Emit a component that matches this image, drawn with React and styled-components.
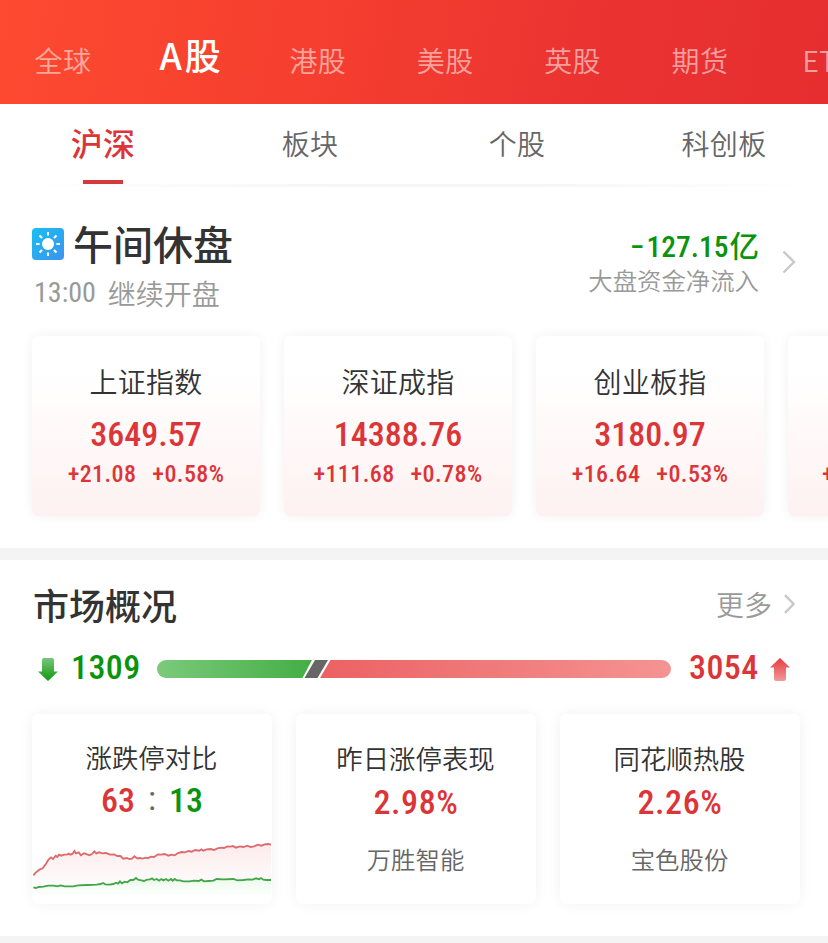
import React from 'react';
import styled, { createGlobalStyle } from 'styled-components';

const indexes = [
  { name: '上证指数', value: '3649.57', diff: '+21.08', rate: '+0.58%' },
  { name: '深证成指', value: '14388.76', diff: '+111.68', rate: '+0.78%' },
  { name: '创业板指', value: '3180.97', diff: '+16.64', rate: '+0.53%' },
];

const markets = ['全球', 'A股', '港股', '美股', '英股', '期货', 'ETF'];
const boards = ['沪深', '板块', '个股', '科创板'];

const UP_LINE =
  '100,526 108,517 118,509 128,505 138,491 146,478 153,472 159,477 167,467 172,471 177,464 184,467 192,464 201,464 206,461 211,464 218,461 223,453 228,460 236,457 243,466 252,460 261,463 269,466 277,461 283,454 289,460 298,457 307,460 318,459 330,464 342,463 352,468 361,468 370,476 380,474 388,477 396,476 403,469 411,475 420,474 428,476 437,473 444,475 452,470 462,471 474,463 484,464 494,462 505,467 514,464 524,466 534,459 545,456 554,457 566,453 575,455 586,450 598,452 604,448 610,452 620,448 632,447 642,450 652,445 664,443 672,444 682,439 691,440 698,438 708,443 719,439 730,441 742,437 752,441 762,439 774,434 784,437 794,433 804,432 813,434';
const DOWN_LINE =
  '100,562 108,564 116,561 130,560 145,557 162,557 172,559 182,556 194,559 220,559 234,556 262,555 290,554 302,552 309,549 316,553 328,554 340,552 348,548 354,551 360,544 366,550 374,545 382,547 391,540 400,540 408,534 414,539 424,541 432,543 441,539 450,538 456,535 462,540 470,537 477,542 484,537 490,541 498,537 505,542 513,537 518,542 524,537 530,541 540,541 550,544 568,544 582,542 596,543 604,539 612,544 626,543 640,542 650,537 670,538 700,537 712,541 730,540 745,538 758,539 768,535 777,538 783,534 790,539 800,540 813,540';

const Chevron = () => (
  <svg width="14" height="24" viewBox="0 0 14 24" fill="none" stroke="#c8c8c8" strokeWidth="2.4">
    <path d="M1.5 1.5 L12 12 L1.5 22.5" />
  </svg>
);

const SunIcon = () => (
  <svg width="32" height="32" viewBox="0 0 32 32">
    <defs>
      <linearGradient id="sky" x1="0" y1="0" x2="1" y2="1">
        <stop offset="0" stopColor="#18bff2" />
        <stop offset="1" stopColor="#3d93ee" />
      </linearGradient>
    </defs>
    <rect width="32" height="32" rx="4" fill="url(#sky)" />
    <circle cx="16" cy="16" r="6" fill="#fff" />
    {[0, 45, 90, 135, 180, 225, 270, 315].map((a) => (
      <path key={a} d="M16 4V7.6" stroke="#fff" strokeWidth="2" transform={`rotate(${a} 16 16)`} />
    ))}
  </svg>
);

const Arrow = ({ up }) => (
  <svg width="20" height="23" viewBox="0 0 20 23">
    <defs>
      <linearGradient id={up ? 'arrowUp' : 'arrowDown'} x1="0" y1="0" x2="0" y2="1">
        <stop offset="0" stopColor={up ? '#e53a3c' : '#7cc47c'} />
        <stop offset="1" stopColor={up ? '#f39a9a' : '#0d9a0d'} />
      </linearGradient>
    </defs>
    {up ? (
      <path d="M10 0 L20 9.5 H16 V21 Q16 23 14 23 H6 Q4 23 4 21 V9.5 H0 Z" fill="url(#arrowUp)" />
    ) : (
      <path d="M10 23 L20 13.5 H16 V2 Q16 0 14 0 H6 Q4 0 4 2 V13.5 H0 Z" fill="url(#arrowDown)" />
    )}
  </svg>
);

const RatioBar = () => (
  <svg width="514" height="18" viewBox="0 0 514 18">
    <defs>
      <linearGradient id="fall" x1="0" y1="0" x2="1" y2="0">
        <stop offset="0" stopColor="#7bca7b" />
        <stop offset="1" stopColor="#44ae44" />
      </linearGradient>
      <linearGradient id="rise" x1="0" y1="0" x2="1" y2="0">
        <stop offset="0" stopColor="#ec6163" />
        <stop offset="1" stopColor="#f49492" />
      </linearGradient>
    </defs>
    <path d="M9 0 H155 L145.5 18 H9 A9 9 0 0 1 9 0 Z" fill="url(#fall)" />
    <path d="M158 0 H171 L160.5 18 H147.5 Z" fill="#666" />
    <path d="M173.5 0 H505 A9 9 0 0 1 505 18 H163 Z" fill="url(#rise)" />
  </svg>
);

const TrendChart = () => (
  <svg width="240" height="71" viewBox="96 399 720 213">
    <defs>
      <linearGradient id="upArea" x1="0" y1="0" x2="0" y2="1">
        <stop offset="0" stopColor="#e03a3a" stopOpacity="0.1" />
        <stop offset="1" stopColor="#e03a3a" stopOpacity="0.01" />
      </linearGradient>
      <linearGradient id="downArea" x1="0" y1="0" x2="0" y2="1">
        <stop offset="0" stopColor="#3ad63a" stopOpacity="0.1" />
        <stop offset="1" stopColor="#3ad63a" stopOpacity="0" />
      </linearGradient>
    </defs>
    <polygon points={`${UP_LINE} 813,540 100,564`} fill="url(#upArea)" />
    <polygon points={`${DOWN_LINE} 813,590 100,590`} fill="url(#downArea)" />
    <polyline points={UP_LINE} fill="none" stroke="#dd6a6c" strokeWidth="5.5" />
    <polyline points={DOWN_LINE} fill="none" stroke="#41a648" strokeWidth="5.5" />
  </svg>
);

const App = () => {
  return (
    <PageStyled>
      <GlobalStyle />
      <MarketNav>
        {markets.map((m) => (
          <MarketItem key={m} $active={m === 'A股'}>
            {m}
          </MarketItem>
        ))}
      </MarketNav>
      <BoardNav>
        {boards.map((b) => (
          <BoardItem key={b} $active={b === '沪深'}>
            {b}
          </BoardItem>
        ))}
      </BoardNav>
      <NavShade />

      <StatusStyled>
        <div className="state">
          <div className="heading">
            <SunIcon />
            <h1>午间休盘</h1>
          </div>
          <div className="next">
            <span className="time">13:00</span>
            <span>继续开盘</span>
          </div>
        </div>
        <div className="flow">
          <div className="amount">
            <span className="minus">−</span>
            <span>127.15</span>
            <span className="unit">亿</span>
          </div>
          <div className="label">大盘资金净流入</div>
        </div>
        <Chevron />
      </StatusStyled>

      <IndexList>
        {indexes.map((i) => (
          <IndexCard key={i.name}>
            <div className="name">{i.name}</div>
            <div className="value">{i.value}</div>
            <div className="change">
              <span>{i.diff}</span>
              <span>{i.rate}</span>
            </div>
          </IndexCard>
        ))}
        <IndexCard $peek>
          <div className="name" />
          <div className="value" />
          <div className="change">+</div>
        </IndexCard>
      </IndexList>

      <Divider />

      <OverviewHead>
        <h2>市场概况</h2>
        <span>更多</span>
        <svg width="11" height="20" viewBox="0 0 11 20" fill="none" stroke="#c8c8c8" strokeWidth="2.4">
          <path d="M1 1.2 L9.6 10 L1 18.8" />
        </svg>
      </OverviewHead>

      <RatioRow>
        <Arrow />
        <Count>1309</Count>
        <RatioBar />
        <Count $up>3054</Count>
        <Arrow up />
      </RatioRow>

      <OverviewList>
        <OverviewCard>
          <div className="title">涨跌停对比</div>
          <div className="versus">
            <span>63</span>
            <i>:</i>
            <b>13</b>
          </div>
          <TrendChart />
        </OverviewCard>
        <OverviewCard>
          <div className="title low">昨日涨停表现</div>
          <div className="percent">2.98%</div>
          <div className="stock">万胜智能</div>
        </OverviewCard>
        <OverviewCard>
          <div className="title low">同花顺热股</div>
          <div className="percent">2.26%</div>
          <div className="stock">宝色股份</div>
        </OverviewCard>
      </OverviewList>

      <Divider />
    </PageStyled>
  );
};

const GlobalStyle = createGlobalStyle`
  * {
    box-sizing: border-box;
  }
  body {
    margin: 0;
    overflow: hidden;
    background: #fff;
  }
  svg {
    display: block;
    flex: none;
  }
`;

const PageStyled = styled.div`
  --red: #dc3538;
  --green: #0a940c;
  --num: 'Roboto Condensed', Roboto, 'Noto Sans CJK SC', sans-serif;
  width: 828px;
  height: 943px;
  overflow: hidden;
  background: #fff;
  font-family: 'Noto Sans CJK SC', sans-serif;
  color: #333;
  white-space: nowrap;
`;

const MarketNav = styled.div`
  display: flex;
  height: 104px;
  background: linear-gradient(100deg, #fd4a30 0%, #f53e2f 40%, #ea3331 72%, #e62e30 100%);
`;

const MarketItem = styled.div`
  flex: 0 0 127.4px;
  text-align: center;
  font-size: ${(p) => (p.$active ? '36px' : '28px')};
  font-weight: ${(p) => (p.$active ? 500 : 350)};
  letter-spacing: ${(p) => (p.$active ? '3px' : '0.4px')};
  text-indent: ${(p) => (p.$active ? '1px' : '-1.4px')};
  line-height: ${(p) => (p.$active ? '109px' : '120px')};
  color: ${(p) => (p.$active ? '#fff' : 'rgba(255, 255, 255, 0.55)')};
`;

const BoardNav = styled.div`
  display: flex;
  height: 80px;
`;

const BoardItem = styled.div`
  flex: 1;
  display: flex;
  flex-direction: column;
  align-items: center;
  padding-right: 1px;
  height: 80px;
  font-size: ${(p) => (p.$active ? '32px' : '28px')};
  font-weight: ${(p) => (p.$active ? 500 : 350)};
  letter-spacing: 0.3px;
  line-height: ${(p) => (p.$active ? '76px' : '78px')};
  color: ${(p) => (p.$active ? 'var(--red)' : '#666')};
  &::after {
    content: '';
    flex: none;
    width: 40px;
    height: ${(p) => (p.$active ? '4px' : 0)};
    background: #d23a3c;
  }
`;

const NavShade = styled.div`
  height: 3px;
  background: linear-gradient(90deg, #fff 3%, #f6f6f6 40%, #f6f6f6 65%, #fff 98%);
`;

const StatusStyled = styled.div`
  display: flex;
  height: 149px;
  padding: 35px 32px 0;
  .state {
    flex: 1;
  }
  .heading {
    display: flex;
    align-items: center;
    gap: 9px;
    height: 44px;
  }
  h1 {
    margin: -2px 0 0;
    font-size: 40px;
    font-weight: 500;
    line-height: 40px;
  }
  .next {
    display: flex;
    gap: 12px;
    margin-top: 7px;
    padding-left: 2px;
    font-size: 28px;
    font-weight: 350;
    line-height: 40px;
    color: #999;
  }
  .time {
    font-family: var(--num);
    font-weight: 400;
  }
  .flow {
    margin-right: 23px;
    text-align: right;
  }
  .amount {
    display: flex;
    justify-content: flex-end;
    margin-top: 5px;
    font-family: var(--num);
    font-size: 29.5px;
    font-weight: 500;
    line-height: 40px;
    color: var(--green);
  }
  .minus {
    margin-right: 2px;
  }
  .unit {
    margin-left: 1px;
  }
  .label {
    margin-top: -1px;
    font-size: 24.4px;
    font-weight: 350;
    line-height: 28px;
    color: #999;
  }
  & > svg {
    margin-top: 28px;
  }
`;

const IndexList = styled.div`
  display: flex;
  gap: 24px;
  height: 212px;
  padding-left: 32px;
`;

const IndexCard = styled.div`
  flex: 0 0 228px;
  height: 180px;
  padding-top: 26px;
  border-radius: 6px;
  text-align: center;
  background: linear-gradient(#fff 20%, #fff8f8 60%, #fdf1f1 100%);
  box-shadow: 0 0 12px rgba(0, 0, 0, 0.06);
  .name {
    height: 40px;
    font-size: 28px;
    font-weight: 350;
    line-height: 39px;
    letter-spacing: 0.2px;
  }
  .value {
    height: 40px;
    margin-top: 12px;
    font-family: var(--num);
    font-size: 34px;
    font-weight: 500;
    line-height: 40px;
    color: var(--red);
  }
  .change {
    display: flex;
    justify-content: ${(p) => (p.$peek ? 'flex-start' : 'center')};
    gap: 16px;
    padding-left: ${(p) => (p.$peek ? '34px' : 0)};
    font-family: var(--num);
    font-size: 24px;
    font-weight: 500;
    line-height: 40px;
    letter-spacing: 0.4px;
    color: var(--red);
  }
`;

const Divider = styled.div`
  height: 12px;
  background: #f4f4f4;
`;

const OverviewHead = styled.div`
  display: flex;
  align-items: center;
  height: 92px;
  padding: 0 33px 4px;
  h2 {
    flex: 1;
    margin: 0;
    font-size: 36px;
    font-weight: 500;
    line-height: 40px;
  }
  span {
    margin-right: 12px;
    font-size: 28px;
    font-weight: 350;
    line-height: 40px;
    color: #999;
  }
`;

const RatioRow = styled.div`
  display: flex;
  align-items: center;
  height: 34px;
  padding: 0 38px;
`;

const Count = styled.div`
  width: 99px;
  padding-left: ${(p) => (p.$up ? '18px' : '13px')};
  padding-bottom: 5px;
  font-family: var(--num);
  font-size: 34px;
  font-weight: 500;
  line-height: 34px;
  letter-spacing: 0.4px;
  color: ${(p) => (p.$up ? 'var(--red)' : 'var(--green)')};
`;

const OverviewList = styled.div`
  display: flex;
  gap: 24px;
  height: 250px;
  padding: 28px 32px 0;
`;

const OverviewCard = styled.div`
  display: flex;
  flex-direction: column;
  align-items: center;
  flex: 0 0 240px;
  height: 190px;
  padding-top: 23px;
  border-radius: 6px;
  background: #fff;
  box-shadow: 0 0 14px rgba(0, 0, 0, 0.06);
  font-family: var(--num);
  .title {
    padding-right: 1px;
    font-family: 'Noto Sans CJK SC', sans-serif;
    font-size: 26.4px;
    font-weight: 350;
    line-height: 40px;
  }
  .low {
    margin-top: 1px;
  }
  .versus {
    display: flex;
    height: 40px;
    margin-top: 3px;
    gap: 13px;
    font-size: 34px;
    font-weight: 500;
    line-height: 40px;
    color: var(--red);
    i {
      font-style: normal;
      font-weight: 400;
      line-height: 36px;
      color: #666;
    }
    b {
      font-weight: 500;
      color: var(--green);
    }
  }
  & > svg {
    margin-top: 13px;
  }
  .percent {
    margin-top: 4px;
    font-size: 34px;
    font-weight: 500;
    line-height: 40px;
    letter-spacing: 0.6px;
    color: var(--red);
  }
  .stock {
    margin-top: 17px;
    padding-right: 1px;
    font-family: 'Noto Sans CJK SC', sans-serif;
    font-size: 24.4px;
    font-weight: 350;
    line-height: 40px;
    color: #666;
  }
`;

export default App;
